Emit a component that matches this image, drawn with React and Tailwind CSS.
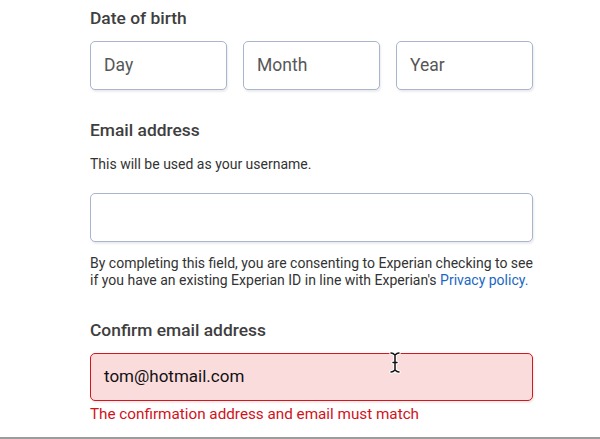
import React from "react";

function IBeam() {
  return (
    <svg width="12" height="23" viewBox="0 0 12 23" className="absolute left-[389px] top-[351px]">
      <path d="M2 2 C4 2 5 3 6 4 C7 3 8 2 10 2 M6 4 V19 M2 21 C4 21 5 20 6 19 C7 20 8 21 10 21 M4 11.5 H8" fill="none" stroke="#fff" strokeWidth="3.5" strokeLinecap="round" />
      <path d="M2 2 C4 2 5 3 6 4 C7 3 8 2 10 2 M6 4 V19 M2 21 C4 21 5 20 6 19 C7 20 8 21 10 21 M4 11.5 H8" fill="none" stroke="#111" strokeWidth="1.5" strokeLinecap="round" />
    </svg>
  );
}

function Field({ placeholder, className = "" }) {
  return (
    <div className={"h-[49px] rounded-[5px] border border-[#a8b5cf] bg-white flex items-center pl-[13px] text-[17.5px] text-[#575757] shadow-[1px_2px_2px_rgba(0,0,0,0.08)] " + className}>
      {placeholder}
    </div>
  );
}

export default function App() {
  return (
    <div className="relative h-[439px] w-[600px] bg-white flex flex-col font-['Roboto',sans-serif] overflow-hidden">
      <div className="flex-1 pl-[90px] w-[533px] box-content">
        <div className="w-[443px]">
          <div className="pt-[8px] text-[17.4px] leading-[20px] font-medium text-[#3e3e3e]">Date of birth</div>
          <div className="mt-[13px] grid grid-cols-3 gap-[16px]">
            <Field placeholder="Day" />
            <Field placeholder="Month" />
            <Field placeholder="Year" />
          </div>

          <div className="mt-[30px] text-[17.4px] leading-[20px] font-medium text-[#3e3e3e]">Email address</div>
          <div className="mt-[15px] text-[14px] leading-[18px] text-[#333]">This will be used as your username.</div>
          <Field placeholder="" className="mt-[20px]" />
          <p className="mt-[13px] text-[14px] leading-[17px] text-[#333]">
            By completing this field, you are consenting to Experian checking to see if you have an existing Experian ID in line with Experian's{" "}
            <span className="text-[#1a67c4]">Privacy policy.</span>
          </p>

          <div className="mt-[31px] text-[17.4px] leading-[20px] font-medium text-[#3e3e3e]">Confirm email address</div>
          <div className="mt-[13px] h-[48px] rounded-[5px] border border-[#d8141c] bg-[#fbdcdd] flex items-center pl-[13px] text-[17px] text-[#111] shadow-[1px_2px_2px_rgba(0,0,0,0.08)]">
            tom@hotmail.com
          </div>
          <div className="mt-[3px] text-[15.25px] leading-[20px] text-[#d0121b]">The confirmation address and email must match</div>
        </div>
      </div>
      <div className="h-[2px] bg-[#9c9c9c]" />
      <IBeam />
    </div>
  );
}
